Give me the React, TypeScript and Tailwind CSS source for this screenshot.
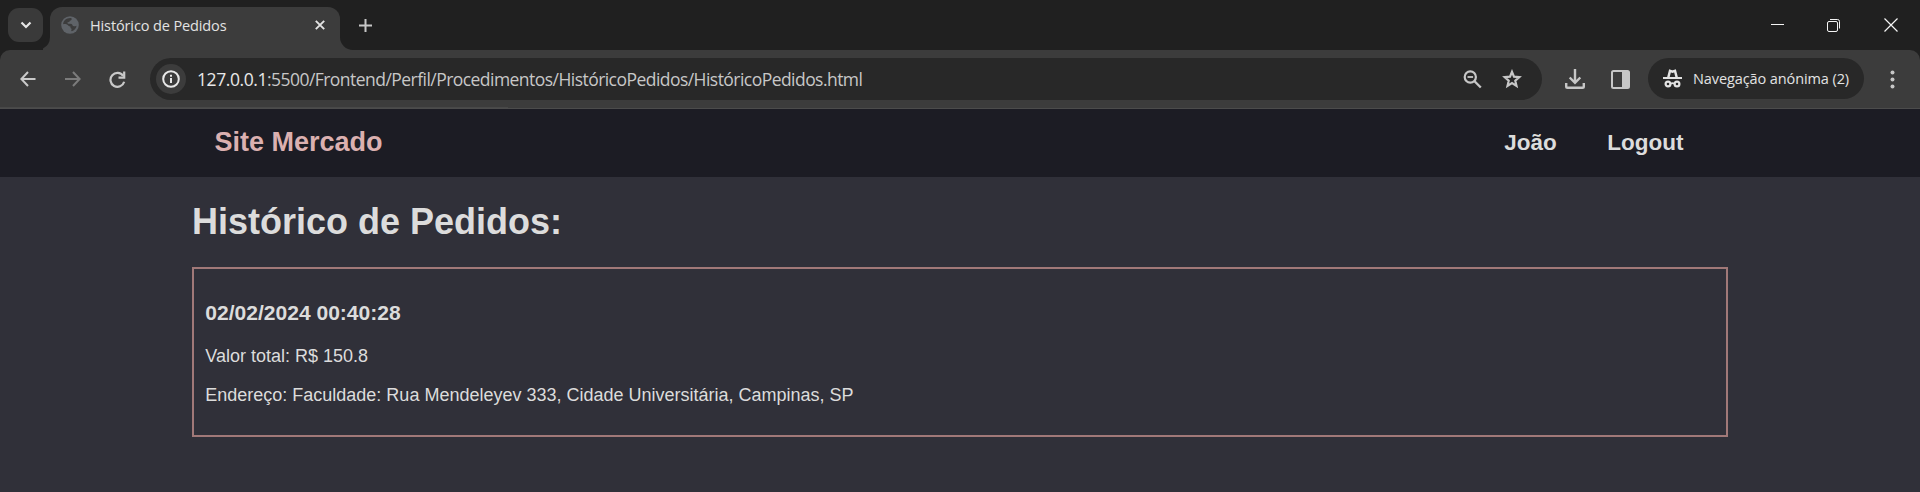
import type { ReactNode } from "react";

type IconProps = { w: number; h: number; className?: string; children: ReactNode };

function Icon({ w, h, className = "", children }: IconProps) {
  return (
    <svg
      width={w}
      height={h}
      viewBox={`0 0 ${w} ${h}`}
      fill="none"
      stroke="currentColor"
      className={`block shrink-0 ${className}`}
    >
      {children}
    </svg>
  );
}

function TabStrip() {
  return (
    <div className="flex h-[50px] bg-[#202020]">
      <div className="ml-2 mt-2 flex h-[34px] w-[35px] items-center justify-center rounded-[11px] bg-[#3a3a3a] text-[#e6e6e6]">
        <Icon w={12} h={8}>
          <path d="M1.500 1.500 6 6l4.500-4.500" strokeWidth="2.200" />
        </Icon>
      </div>
      <div className="flex w-[7px] items-end">
        <Icon w={7} h={50}>
          <path d="M7 37a13 13 0 0 1-7 11.500V50h7z" fill="#3c3c3c" stroke="none" />
        </Icon>
      </div>
      <div className="mt-[7px] flex h-[43px] w-[290px] items-center rounded-t-[12px] bg-[#3c3c3c] pb-[7px] pl-[11px]">
        <Icon w={18} h={18} className="text-[#5f6368]">
          <circle cx="9" cy="9" r="8.800" fill="currentColor" stroke="none" />
          <path
            d="M10.500 2.200c.6 1.600-.4 2.400-1.700 2.500-.4 1.500-1.300 1.600-2.500 1.700.2 1.300 1 1.400 3 1.400 1.700 0 2.400 1.200 2.500 2.300.9.300 2.200.2 3.800-.4-.5 2.700-2.400 4.800-4.900 5.600-.7-.6-.6-1.700.2-2.400-1.400-.3-1.500-1.300-1.500-2.300-1.800-.1-2.200-1.300-3.500-2-1.100-.6-2.400-.5-3.800-.4C2.200 4.600 6 1.500 10.500 2.200z"
            fill="#3c3c3c"
            stroke="none"
          />
        </Icon>
        <span className="ml-[11px] w-[225px] whitespace-nowrap pt-0.5 text-[14.500px] leading-5 tracking-[-0.120px] text-[#e3e3e3]">
          Histórico de Pedidos
        </span>
        <Icon w={10} h={10} className="text-[#e3e3e3]">
          <path d="m.8.8 8.400 8.400M9.200.8.8 9.200" strokeWidth="1.900" />
        </Icon>
      </div>
      <Icon w={13} h={50}>
        <path d="M0 37a13 13 0 0 0 13 13H0z" fill="#3c3c3c" stroke="none" />
      </Icon>
      <Icon w={13} h={13} className="ml-[6px] mt-[19px] text-[#c7c7c7]">
        <path d="M6.500 0v13M0 6.500h13" strokeWidth="2" />
      </Icon>
      <div className="ml-auto mr-[22px] flex h-[49px] items-center text-[#f5f5f5]">
        <Icon w={13} h={13}>
          <path d="M0 6.500h13" />
        </Icon>
        <Icon w={13} h={14} className="ml-[43px]">
          <rect x=".5" y="3.500" width="10" height="10" rx="1.500" />
          <path d="M3 1.500h7.500a2 2 0 0 1 2 2V10.500" />
        </Icon>
        <Icon w={14} h={14} className="ml-[44px]">
          <path d="m.5.500 13 13M13.500.500l-13 13" strokeWidth="1.200" />
        </Icon>
      </div>
    </div>
  );
}

function Toolbar() {
  return (
    <div className="bg-[#202020]">
      <div className="flex h-[59px] flex-col justify-between rounded-t-[10px] border-b border-[#4c4c4c] bg-[#3c3c3c] pt-2">
        <div className="flex h-[42px]">
          <div className="flex w-[150px] items-center pl-5">
            <Icon w={16} h={16} className="text-[#c9c9c9]">
              <path d="M15.500 8H1.500M8 1 1.400 8 8 15" strokeWidth="2" />
            </Icon>
            <Icon w={16} h={16} className="ml-[29px] text-[#7b7b7b]">
              <path d="M0 8h14M8 1l6.600 7L8 15" strokeWidth="2" />
            </Icon>
            <Icon w={17} h={17} className="ml-[28px] text-[#c9c9c9]">
              <path d="M14.200 4.800A7 7 0 1 0 15.200 10.800" strokeWidth="2.200" />
              <path d="M15.200.5v6.200H9.500" strokeWidth="2.200" />
            </Icon>
          </div>
          <div className="flex w-[1392px] items-center rounded-full bg-[#282828] pl-[6px]">
            <div className="flex size-[30px] items-center justify-center rounded-full bg-[#3c3c3c] text-[#e8e8e8]">
              <Icon w={18} h={18}>
                <circle cx="9" cy="9" r="7.800" strokeWidth="2" />
                <path d="M9 8v5M9 4.700v2" strokeWidth="2" />
              </Icon>
            </div>
            <span className="ml-[11px] whitespace-nowrap pb-px text-[17.500px] leading-6 tracking-[-0.540px] text-[#c7c7c7]">
              <span className="tracking-[-0.430px] text-[#e8e8e8]">127.0.0.1</span>
              :5500/Frontend/Perfil/Procedimentos/HistóricoPedidos/HistóricoPedidos.html
            </span>
            <div className="ml-auto mr-[20px] flex items-center text-[#c7c7c7]">
              <Icon w={19} h={19}>
                <circle cx="7.300" cy="7" r="5.600" strokeWidth="2.200" />
                <path d="m11.300 11 6.500 6.500" strokeWidth="2.400" />
                <path d="M4.500 7h5.600" strokeWidth="1.800" />
              </Icon>
              <Icon w={20} h={20} className="ml-[20px]">
                <path
                  d="m10 2.800 2 4.900 5.300.5-4 3.500 1.200 5.200-4.500-2.800-4.500 2.800 1.200-5.200-4-3.500 5.300-.5z"
                  strokeWidth="2.200"
                />
              </Icon>
            </div>
          </div>
          <div className="flex items-center text-[#c7c7c7]">
            <Icon w={20} h={20} className="ml-[23px]">
              <path d="M10 0v13.500M4.700 8.500l5.300 5.300 5.300-5.300" strokeWidth="2.400" />
              <path d="M1.200 14v3.500q0 1.300 1.300 1.300h15q1.300 0 1.300-1.300V14" strokeWidth="2.400" />
            </Icon>
            <Icon w={19} h={19} className="ml-[26px]">
              <rect x="1" y="1" width="17" height="17" rx="1.500" strokeWidth="2" />
              <path d="M11 1h7v17h-7z" fill="currentColor" stroke="none" />
            </Icon>
            <div className="mb-px ml-[18px] flex h-[41px] w-[216px] items-center rounded-full bg-[#282828] pl-[15px] text-[#e3e3e3]">
              <Icon w={19} h={19}>
                <path d="M5.300 8.500 7 1.800l2.500.9 2.500-.9 1.700 6.700" strokeWidth="2.500" />
                <path d="M0 9h19" strokeWidth="2" />
                <circle cx="5" cy="15" r="2.400" strokeWidth="2.200" />
                <circle cx="14" cy="15" r="2.400" strokeWidth="2.200" />
                <path d="M7.500 14.700q2-1 4 0" strokeWidth="1.800" />
              </Icon>
              <span className="ml-[11px] whitespace-nowrap text-[14.500px] leading-5 tracking-[-0.100px]">
                Navegação anónima (2)
              </span>
            </div>
            <Icon w={5} h={19} className="ml-[26px]">
              <g fill="currentColor" stroke="none">
                <circle cx="2.500" cy="2.500" r="2" />
                <circle cx="2.500" cy="9.500" r="2" />
                <circle cx="2.500" cy="16.500" r="2" />
              </g>
            </Icon>
          </div>
        </div>
        <div className="h-px w-[508px] bg-[#484848]" />
      </div>
    </div>
  );
}

function SiteHeader() {
  return (
    <header className="flex h-[68px] items-center justify-between bg-[#1c1c24] pl-[214.500px] pr-[236.500px] font-bold">
      <span className="pb-0.5 text-[27px] leading-8 text-[#dbb0b0]">Site Mercado</span>
      <nav className="flex gap-[50.500px] pb-px text-[22.500px] leading-7 text-[#dcdcdc]">
        <span>João</span>
        <span>Logout</span>
      </nav>
    </header>
  );
}

export default function App() {
  return (
    <div className="flex h-[492px] w-[1920px] flex-col overflow-hidden bg-[#303039]">
      <div className="font-['Open_Sans',sans-serif]">
        <TabStrip />
        <Toolbar />
      </div>
      <div className="font-['Liberation_Sans',Arial,sans-serif] text-[#dcdcdc]">
        <SiteHeader />
        <main className="mx-[192px] pt-[25px]">
          <h1 className="text-[36px] font-bold leading-10">Histórico de Pedidos:</h1>
          <section className="mt-[25px] h-[170px] border-2 border-[#a07878] px-[11.250px] pt-8">
            <h3 className="text-[21.060px] font-bold leading-6">02/02/2024 00:40:28</h3>
            <p className="mt-[21px] text-[18px] leading-5">Valor total: R$ 150.8</p>
            <p className="mt-[19px] text-[18px] leading-5">
              Endereço: Faculdade: Rua Mendeleyev 333, Cidade Universitária, Campinas, SP
            </p>
          </section>
        </main>
      </div>
    </div>
  );
}
